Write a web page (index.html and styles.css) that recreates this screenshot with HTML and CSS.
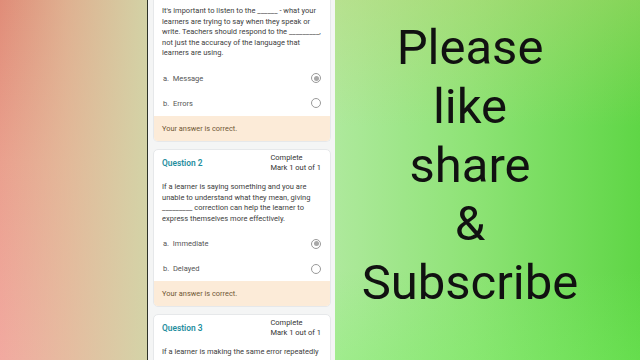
FILE: index.html
```html
<!DOCTYPE html>
<html>
<head>
<meta charset="utf-8">
<link rel="stylesheet" href="styles.css">
</head>
<body>
<div class="frame">
  <div class="side-left"></div>
  <div class="phone">
    <div class="card card-first">
      <div class="card-body">
        <p class="question-text">It's important to listen to the ______ - what your learners are trying to say when they speak or write. Teachers should respond to the _________, not just the accuracy of the language that learners are using.</p>
        <div class="options">
          <div class="option"><span class="opt-label">a.&nbsp; Message</span><span class="radio checked"></span></div>
          <div class="option"><span class="opt-label">b.&nbsp; Errors</span><span class="radio"></span></div>
        </div>
      </div>
      <div class="feedback">Your answer is correct.</div>
    </div>

    <div class="card">
      <div class="card-body">
        <div class="card-head">
          <span class="q-title">Question 2</span>
          <span class="q-status">Complete<br>Mark 1 out of 1</span>
        </div>
        <p class="question-text">If a learner is saying something and you are unable to understand what they mean, giving _________ correction can help the learner to express themselves more effectively.</p>
        <div class="options">
          <div class="option"><span class="opt-label">a.&nbsp; Immediate</span><span class="radio checked"></span></div>
          <div class="option"><span class="opt-label">b.&nbsp; Delayed</span><span class="radio"></span></div>
        </div>
      </div>
      <div class="feedback">Your answer is correct.</div>
    </div>

    <div class="card">
      <div class="card-body">
        <div class="card-head">
          <span class="q-title">Question 3</span>
          <span class="q-status">Complete<br>Mark 1 out of 1</span>
        </div>
        <p class="question-text">If a learner is making the same error repeatedly when they speak, correcting them quickly is helpful for them.</p>
      </div>
    </div>
  </div>
  <div class="side-right">
    <div class="promo">Please<br>like<br>share<br>&amp;<br>Subscribe</div>
  </div>
</div>
</body>
</html>
```

FILE: styles.css
```css
* { box-sizing: border-box; }
html, body {
  margin: 0;
  padding: 0;
  width: 640px;
  height: 360px;
  overflow: hidden;
}
body {
  font-family: Roboto, "Liberation Sans", Arial, sans-serif;
}
.frame {
  display: flex;
  width: 640px;
  height: 360px;
}
.side-left {
  width: 147px;
  flex: none;
  background:
    linear-gradient(to right, rgba(222,200,160,0) 0%, rgba(222,200,160,0.6) 45%, rgba(210,214,168,0.95) 100%),
    linear-gradient(to bottom, #e08c78 0%, #eaa08e 45%, #f2a9a0 100%);
}
.phone {
  width: 188px;
  flex: none;
  background: #f4f5f5;
  border-left: 1.5px solid #2e3328;
  display: flex;
  flex-direction: column;
  gap: 7px;
  padding: 0 4px 0 5px;
  overflow: hidden;
}
.card {
  background: #fff;
  border: 1px solid #e6e8ea;
  border-radius: 5px;
  overflow: hidden;
  flex: none;
}
.card-first {
  margin-top: -2px;
  border-top: none;
  border-radius: 0 0 5px 5px;
}
.card-body {
  padding: 3px 8px 0 8px;
}
.card-first .card-body {
  padding-top: 8px;
}
.card-head {
  display: flex;
  justify-content: space-between;
  align-items: center;
  margin-bottom: 9px;
}
.q-title {
  color: #1f8e9e;
  font-size: 8.4px;
  font-weight: 600;
}
.q-status {
  color: #333;
  font-size: 7.5px;
  line-height: 10px;
  padding-right: 1px;
}
.question-text {
  margin: 0;
  color: #3d3d3d;
  font-size: 7.5px;
  line-height: 10.6px;
}
.options {
  margin-top: 7px;
  display: flex;
  flex-direction: column;
}
.option {
  height: 25px;
  display: flex;
  align-items: center;
  justify-content: space-between;
  font-size: 7.5px;
  color: #555;
  padding-left: 1px;
}
.radio {
  width: 10px;
  height: 10px;
  border: 1px solid #9a9a9a;
  border-radius: 50%;
  margin-right: 1px;
  display: flex;
  align-items: center;
  justify-content: center;
}
.radio.checked::after {
  content: "";
  width: 5px;
  height: 5px;
  border-radius: 50%;
  background: #a8a8a8;
}
.feedback {
  background: #fcebd8;
  color: #6f5634;
  font-size: 7.4px;
  height: 25px;
  display: flex;
  align-items: center;
  padding: 0 8px;
}
.side-right {
  flex: 1;
  background:
    linear-gradient(to bottom, rgba(200,210,120,0.35) 0%, rgba(200,210,120,0) 35%, rgba(120,245,100,0) 75%, rgba(120,245,100,0.25) 100%),
    linear-gradient(to right, #aee99c 0%, #8ee376 45%, #5fd646 100%);
  padding: 19px 35px 0 0;
  text-align: center;
}
.promo {
  font-family: Roboto, "Liberation Sans", Arial, sans-serif;
  font-size: 49px;
  line-height: 58.75px;
  color: #111;
}
```
